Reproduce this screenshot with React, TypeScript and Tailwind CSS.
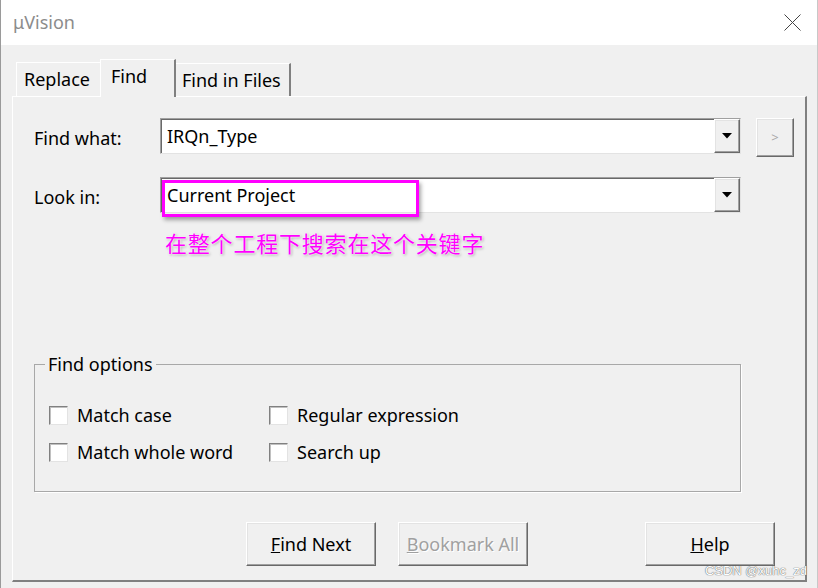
import React from 'react';

const raised =
  'border border-t-white border-l-white border-r-[#696969] border-b-[#696969] shadow-[inset_-1px_-1px_0_#a0a0a0,inset_1px_1px_0_#e3e3e3]';
const sunken =
  'border border-t-[#a0a0a0] border-l-[#a0a0a0] border-r-[#e3e3e3] border-b-[#e3e3e3] shadow-[inset_1px_1px_0_#696969]';

function DropArrow() {
  return (
    <svg width="10" height="6" viewBox="0 0 10 6">
      <path d="M0 0h10L5 5.5z" fill="#000" />
    </svg>
  );
}

function Combo({ value, children }: { value: string; children?: React.ReactNode }) {
  return (
    <div className={`relative flex h-[36px] w-[581px] bg-white ${sunken}`}>
      <div className="flex flex-1 items-center pl-[6px] text-black">{value}</div>
      <div className={`flex w-[26px] items-center justify-center bg-[#f0f0f0] ${raised}`}>
        <DropArrow />
      </div>
      {children}
    </div>
  );
}

function Check({ label }: { label: string }) {
  return (
    <div className="flex h-[20px] items-center gap-[9px]">
      <div className="h-[19px] w-[19px] border border-t-[#808080] border-l-[#808080] border-r-[#e3e3e3] border-b-[#e3e3e3] bg-white shadow-[inset_1px_1px_0_#c0c0c0]" />
      <span className="text-black">{label}</span>
    </div>
  );
}

export default function App() {
  return (
    <div className="relative h-[588px] w-[818px] overflow-hidden border-l border-r border-l-[#9a9a9a] border-r-[#c8c8c8] bg-[#f0f0f0] font-['Noto_Sans','Noto_Sans_CJK_SC',sans-serif] text-[18px]">
      {/* title bar */}
      <div className="flex h-[45px] items-center justify-between bg-white pb-[1px] pl-[12px] pr-[16px]">
        <span className="text-[#8c8c8c]">μVision</span>
        <svg width="17" height="17" viewBox="0 0 17 17">
          <path d="M0.5 0.5L16.5 16.5M16.5 0.5L0.5 16.5" stroke="#444" strokeWidth="1" />
        </svg>
      </div>

      <div className="pl-[11px] pr-[11px] pt-[14px]">
        {/* tabs */}
        <div className="flex h-[37px] items-end pl-[4px] text-black">
          <div className="flex h-[34px] w-[84px] items-center border-l border-t border-l-white border-t-white pl-[7px]">
            Replace
          </div>
          <div className="relative z-10 -mb-px flex h-[38px] w-[76px] items-start border-l border-r-2 border-t border-l-white border-r-[#808080] border-t-white bg-[#f0f0f0] pl-[10px] pt-[3px]">
            Find
          </div>
          <div className="flex h-[33px] w-[115px] items-center border-r-2 border-t border-r-[#808080] border-t-white pl-[6px]">
            Find in Files
          </div>
        </div>

        {/* tab panel */}
        <div className="h-[486px] w-[795px] border-b-2 border-l border-r-2 border-t border-b-[#808080] border-l-white border-r-[#808080] border-t-white pl-[21px] text-black">
          <div className="mt-[21px] flex items-start">
            <div className="flex h-[40px] w-[126px] items-center">Find what:</div>
            <Combo value="IRQn_Type" />
            <div className={`ml-[15px] flex h-[39px] w-[38px] items-center justify-center text-[13px] text-[#a8a8a8] ${raised}`}>
              &gt;
            </div>
          </div>

          <div className="mt-[19px] flex items-start">
            <div className="flex h-[40px] w-[126px] items-center">Look in:</div>
            <Combo value="Current Project">
              <div className="absolute left-[1px] top-[2px] h-[37px] w-[257px] border-[3px] border-[#ff00ff] shadow-[2px_3px_4px_rgba(0,0,0,0.35)]" />
            </Combo>
          </div>

          <div className="ml-[131px] mt-[11px] text-[22px] leading-[30px] tracking-[0.8px] text-[#ff00ff] [text-shadow:0_0_2px_#fff,0_0_2px_#fff,1px_1px_3px_rgba(0,0,0,0.4)]">
            在整个工程下搜索在这个关键字
          </div>

          <fieldset className="mt-[94px] h-[140px] w-[707px] border border-[#a8a8a8] shadow-[1px_1px_0_#fff]">
            <legend className="ml-[10px] px-[3px] leading-[24px]">Find options</legend>
            <div className="mt-[29px] grid grid-cols-[220px_1fr] gap-y-[17px] pl-[14px]">
              <Check label="Match case" />
              <Check label="Regular expression" />
              <Check label="Match whole word" />
              <Check label="Search up" />
            </div>
          </fieldset>

          <div className="mt-[30px] flex pl-[212px]">
            <div className={`flex h-[44px] w-[130px] items-center justify-center ${raised}`}>
              <span><u>F</u>ind Next</span>
            </div>
            <div className={`ml-[22px] flex h-[44px] w-[130px] items-center justify-center text-[#a0a0a0] [text-shadow:1px_1px_0_#fff] ${raised}`}>
              <span><u>B</u>ookmark All</span>
            </div>
            <div className={`ml-[117px] flex h-[44px] w-[130px] items-center justify-center ${raised}`}>
              <span><u>H</u>elp</span>
            </div>
          </div>
        </div>
      </div>

      <div className="absolute bottom-[8px] right-[10px] font-['Liberation_Sans',sans-serif] text-[13px] text-white [text-shadow:0_0_1px_#666,0_0_1px_#666]">
        CSDN @xuhc_zd
      </div>
    </div>
  );
}
